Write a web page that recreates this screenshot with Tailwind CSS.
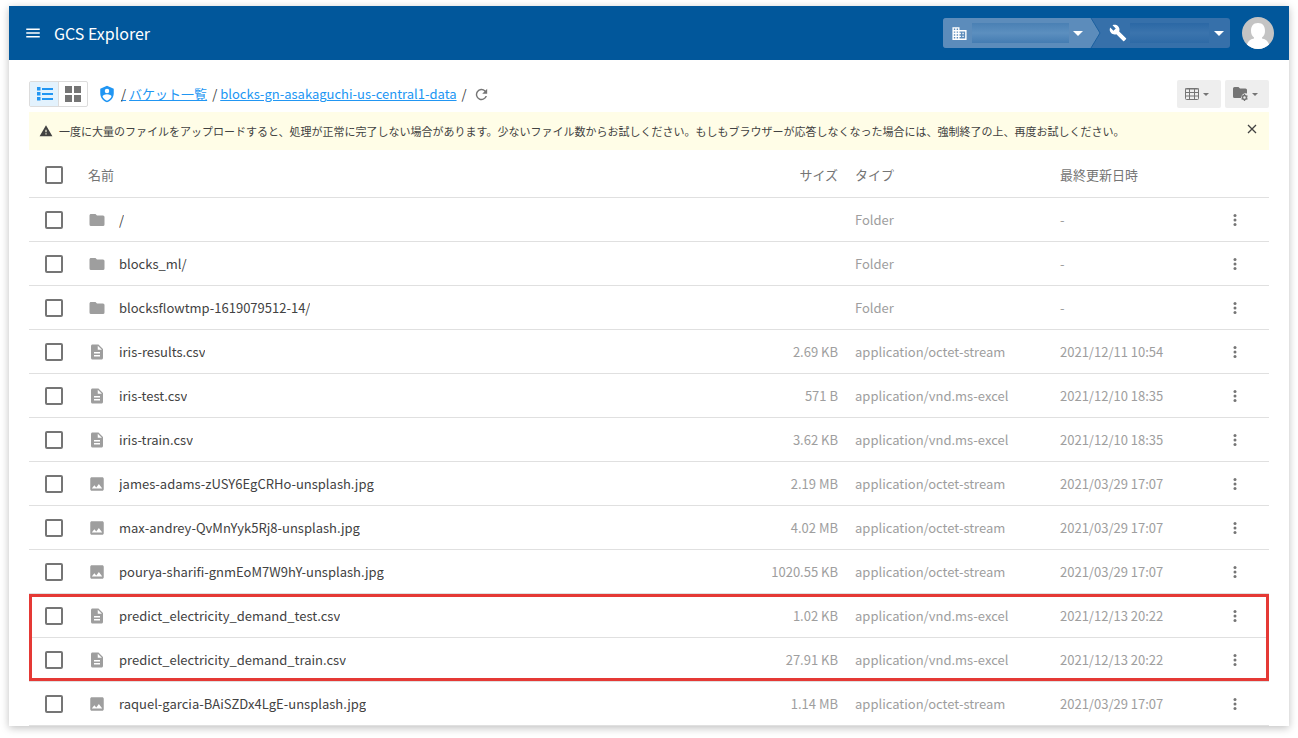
<!DOCTYPE html>
<html lang="ja">
<head>
    <meta charset="UTF-8">
    <meta name="viewport" content="width=device-width, initial-scale=1.0">
    <title>GCS Explorer</title>
    <script src="https://cdn.jsdelivr.net/npm/@tailwindcss/browser@4"></script>
</head>
<body class="bg-white font-['Noto_Sans_CJK_JP',sans-serif] text-[13px] text-[#424242]">
    <!-- Icons -->
    <svg class="hidden">
        <symbol id="folder" viewBox="0 0 24 24"><path d="M10 4H4c-1.1 0-2 .9-2 2v12a2 2 0 0 0 2 2h16a2 2 0 0 0 2-2V8a2 2 0 0 0-2-2h-8l-2-2z"/></symbol>
        <symbol id="file" viewBox="0 0 24 24"><path d="M14 2H6c-1.1 0-2 .9-2 2v16c0 1.1.9 2 2 2h12c1.1 0 2-.9 2-2V8l-6-6zm2 16H8v-2h8v2zm0-4H8v-2h8v2zm-3-5V3.500L18.500 9H13z"/></symbol>
        <symbol id="image" viewBox="0 0 24 24"><path d="M21 19V5c0-1.100-.9-2-2-2H5c-1.100 0-2 .9-2 2v14c0 1.100.9 2 2 2h14c1.100 0 2-.9 2-2zM8.500 13.500l2.500 3L14.500 12l4.500 6H5l3.500-4.500z"/></symbol>
        <symbol id="dots" viewBox="0 0 24 24"><circle cx="12" cy="6" r="2"/><circle cx="12" cy="12" r="2"/><circle cx="12" cy="18" r="2"/></symbol>
    </svg>

    <div class="mx-[9px] mt-1.5 mb-3 bg-white shadow-[0_2px_8px_rgba(0,0,0,0.25)]">
        <!-- Header -->
        <header class="flex items-center h-[54px] pl-[15px] pr-[15px] bg-[#01579b] text-white">
            <button type="button" aria-label="メニュー">
                <svg class="size-[18px]" viewBox="0 0 24 24" fill="currentColor"><path d="M3 6h18v2H3zM3 11h18v2H3zM3 16h18v2H3z"/></svg>
            </button>
            <h1 class="ml-3 text-base">GCS Explorer</h1>

            <div class="relative flex ml-auto h-[30px] rounded-[3px] bg-[#3670aa] overflow-hidden">
                <svg class="absolute inset-0 w-[160px] h-[30px]" viewBox="0 0 160 30">
                    <path d="M0 0H148L157 15L148 30H0z" fill="#5c8cbb"/>
                    <path d="M148 0L157 15L148 30" fill="none" stroke="#1c609f"/>
                </svg>
                <button type="button" aria-label="プロジェクト" class="relative flex items-center w-[157px] pl-2">
                    <svg class="size-[17px]" viewBox="0 0 24 24" fill="currentColor"><path d="M12 7V3H2v18h20V7H12zM6 19H4v-2h2v2zm0-4H4v-2h2v2zm0-4H4V9h2v2zm0-4H4V5h2v2zm4 12H8v-2h2v2zm0-4H8v-2h2v2zm0-4H8V9h2v2zm0-4H8V5h2v2zm10 12h-8v-2h2v-2h-2v-2h2v-2h-2V9h8v10zm-2-8h-2v2h2v-2zm0 4h-2v2h2v-2z"/></svg>
                    <span class="ml-1 w-[97px] h-5 bg-linear-to-b from-[#4a80b4] via-[#5c8fbf] to-[#447cb2]"></span>
                    <svg class="ml-1 w-[10px] h-[5px]" viewBox="0 0 10 5" fill="currentColor"><path d="M0 0h10L5 5z"/></svg>
                </button>
                <button type="button" aria-label="ツール" class="relative flex items-center w-[130px] pl-[9px]">
                    <svg class="size-[18px]" viewBox="0 0 24 24" fill="currentColor"><path d="M22.700 19l-9.100-9.100c.9-2.300.4-5-1.500-6.900-2-2-5-2.400-7.400-1.300L9 6 6 9 1.600 4.700C.4 7.100.9 10.100 2.900 12.100c1.900 1.900 4.600 2.400 6.900 1.500l9.100 9.100c.4.4 1 .4 1.400 0l2.300-2.300c.5-.4.5-1.100.1-1.400z"/></svg>
                    <span class="ml-[3px] w-[79px] h-5 bg-linear-to-b from-[#2b68a5] via-[#3b74ad] to-[#2e6aa6]"></span>
                    <svg class="ml-[5px] w-[10px] h-[5px]" viewBox="0 0 10 5" fill="currentColor"><path d="M0 0h10L5 5z"/></svg>
                </button>
            </div>
            <button type="button" aria-label="アカウント" class="ml-3">
                <svg class="size-8 rounded-full" viewBox="0 0 32 32">
                    <path d="M0 0h32v32H0z" fill="#c4c4c4"/>
                    <path d="M16 6c5 0 7 3.500 7 8 0 3-1 5-3 6.500v1c4 .5 6.500 3 7.500 7.500L22 32H10l-5.500-3C5.500 24.500 8 22 12 21.500v-1C10 19 9 17 9 14c0-4.500 2-8 7-8z" fill="#fff"/>
                </svg>
            </button>
        </header>

        <main class="px-5 pt-5">
            <!-- Toolbar -->
            <div class="flex items-center h-7">
                <div class="flex h-[26px] border border-[#dcdcdc] rounded-[2px]">
                    <button type="button" aria-label="リスト表示" class="flex items-center justify-center w-[29px] pl-px bg-[#e3f2fd] border-r border-[#dcdcdc] text-[#2196f3]">
                        <svg class="w-4 h-3.5" viewBox="0 0 16 14" fill="currentColor"><path d="M0 0h3.500v3.500H0zM0 5h3.500v3.500H0zM0 10h3.500v3.500H0zM5 1h11v2H5zM5 6h11v2H5zM5 11h11v2H5z"/></svg>
                    </button>
                    <button type="button" aria-label="グリッド表示" class="flex items-center justify-center w-7 text-[#757575]">
                        <svg class="size-4" viewBox="0 0 16 16" fill="currentColor"><path d="M0 0h7v7H0zM9 0h7v7H9zM0 9h7v7H0zM9 9h7v7H9z"/></svg>
                    </button>
                </div>
                <nav class="flex items-center ml-2.5">
                    <a href="#" aria-label="プロジェクト" class="text-[#2196f3]">
                        <svg class="size-[18px]" viewBox="0 0 24 24" fill="currentColor"><path d="M12 1L3 5v6c0 5.550 3.840 10.740 9 12 5.160-1.260 9-6.450 9-12V5l-9-4zm0 4a3 3 0 1 1 0 6 3 3 0 0 1 0-6zm5.130 12A9.700 9.700 0 0 1 12 20.920 9.700 9.700 0 0 1 6.870 17 12 12 0 0 1 6 15.470c0-1.650 2.710-3 6-3s6 1.320 6 3A12 12 0 0 1 17.130 17z"/></svg>
                    </a>
                    <span class="ml-[5px] underline decoration-[#2196f3]">/</span>
                    <a href="#" class="ml-[3px] text-[#2196f3] underline">バケット一覧</a>
                    <span class="ml-[5px]">/</span>
                    <a href="#" class="ml-[3px] text-[#2196f3] underline">blocks-gn-asakaguchi-us-central1-data</a>
                    <span class="ml-[5px]">/</span>
                    <button type="button" aria-label="更新" class="ml-1.5 text-[#757575]">
                        <svg class="size-[17px]" viewBox="0 0 24 24" fill="currentColor"><path d="M17.650 6.350A8 8 0 1 0 19.730 14h-2.080A6 6 0 1 1 16.220 7.780L13 11h7V4l-2.350 2.350z"/></svg>
                    </button>
                </nav>
                <div class="flex gap-1 ml-auto text-[#757575]">
                    <button type="button" aria-label="表示列" class="flex items-center justify-center gap-1 w-11 h-7 pr-1 rounded-[2px] bg-[#eeeeee]">
                        <svg class="w-3.5 h-3" viewBox="0 0 14 12" fill="none" stroke="currentColor"><rect x=".5" y=".5" width="13" height="11" rx="1"/><path d="M0 1h14M0 4.500h14M0 8h14M4.500 1v11M9.500 1v11"/></svg>
                        <svg class="w-1.5 h-[3px]" viewBox="0 0 6 3" fill="currentColor"><path d="M0 0h6L3 3z"/></svg>
                    </button>
                    <button type="button" aria-label="フォルダ操作" class="flex items-center justify-center gap-1 w-11 h-7 pr-1 rounded-[2px] bg-[#eeeeee]">
                        <svg class="w-[15px] h-[14px]" viewBox="0 0 15 14" fill="currentColor"><path d="M1.500 0h4L7 1.500h5.500A1.500 1.500 0 0 1 14 3v3.500a4.500 4.500 0 0 0-6 4.500H1.500A1.500 1.500 0 0 1 0 9.500v-8A1.500 1.500 0 0 1 1.500 0z"/><circle cx="11.500" cy="10.500" r="2" fill="none" stroke="currentColor" stroke-width="1.500"/><path d="M11.500 7v1.500M11.500 12.500V14M8.500 8.700l1.300.8M13.200 11.500l1.300.8M8.500 12.300l1.300-.8M13.200 9.500l1.300-.8" stroke="currentColor" stroke-width="1.300"/></svg>
                        <svg class="w-1.5 h-[3px]" viewBox="0 0 6 3" fill="currentColor"><path d="M0 0h6L3 3z"/></svg>
                    </button>
                </div>
            </div>

            <!-- Notice -->
            <div class="flex items-center mt-1 min-h-[38px] pl-2.5 pr-3 bg-[#fffde7]">
                <svg class="size-3.5 shrink-0" viewBox="0 0 24 24" fill="currentColor"><path d="M1 21h22L12 2 1 21zm12-3h-2v-2h2v2zm0-4h-2v-4h2v4z"/></svg>
                <p class="ml-1.5 text-[11px]">一度に大量のファイルをアップロードすると、処理が正常に完了しない場合があります。少ないファイル数からお試しください。もしもブラウザーが応答しなくなった場合には、強制終了の上、再度お試しください。</p>
                <button type="button" aria-label="閉じる" class="ml-auto mb-1">
                    <svg class="size-2.5" viewBox="0 0 10 10" fill="none" stroke="currentColor" stroke-width="1.300"><path d="M1 1l8 8M9 1L1 9"/></svg>
                </button>
            </div>

            <!-- File list -->
            <table id="fileTable" class="w-full mt-[3px] table-fixed border-separate border-spacing-0 text-left text-[#9e9e9e]">
                <thead class="text-[#757575]">
                    <tr class="h-[45px] *:border-b *:border-[#e0e0e0] *:font-normal">
                        <th class="w-[59px] pl-4"><input type="checkbox" aria-label="すべて選択" class="block size-[18px] appearance-none border-2 border-[#757575] rounded-[2px] checked:bg-[#2196f3]"></th>
                        <th>名前</th>
                        <th class="w-[120px] pr-[9px] text-right">サイズ</th>
                        <th class="w-[205px] pl-2">タイプ</th>
                        <th class="w-[149px] pl-2">最終更新日時</th>
                        <th class="w-[68px]"></th>
                    </tr>
                </thead>
            </table>
        </main>
    </div>

    <script>
        const octet = 'application/octet-stream';
        const excel = 'application/vnd.ms-excel';

        // each group becomes one tbody
        const groups = [
            { marked: false, files: [
                ['folder', '/', '', 'Folder', '-'],
                ['folder', 'blocks_ml/', '', 'Folder', '-'],
                ['folder', 'blocksflowtmp-1619079512-14/', '', 'Folder', '-'],
                ['file', 'iris-results.csv', '2.69 KB', octet, '2021/12/11 10:54'],
                ['file', 'iris-test.csv', '571 B', excel, '2021/12/10 18:35'],
                ['file', 'iris-train.csv', '3.62 KB', excel, '2021/12/10 18:35'],
                ['image', 'james-adams-zUSY6EgCRHo-unsplash.jpg', '2.19 MB', octet, '2021/03/29 17:07'],
                ['image', 'max-andrey-QvMnYyk5Rj8-unsplash.jpg', '4.02 MB', octet, '2021/03/29 17:07'],
                ['image', 'pourya-sharifi-gnmEoM7W9hY-unsplash.jpg', '1020.55 KB', octet, '2021/03/29 17:07'],
            ] },
            { marked: true, files: [
                ['file', 'predict_electricity_demand_test.csv', '1.02 KB', excel, '2021/12/13 20:22'],
                ['file', 'predict_electricity_demand_train.csv', '27.91 KB', excel, '2021/12/13 20:22'],
            ] },
            { marked: false, files: [
                ['image', 'raquel-garcia-BAiSZDx4LgE-unsplash.jpg', '1.14 MB', octet, '2021/03/29 17:07'],
            ] },
        ];

        const row = ([icon, name, size, type, date]) => `
            <tr class="h-11 *:border-b *:border-[#e0e0e0]">
                <td class="pl-4"><input type="checkbox" aria-label="${name}" class="block size-[18px] appearance-none border-2 border-[#757575] rounded-[2px] checked:bg-[#2196f3]"></td>
                <td>
                    <div class="flex items-center gap-[13px] text-[#424242]">
                        <svg class="size-[18px] shrink-0 text-[#9e9e9e]" fill="currentColor"><use href="#${icon}"/></svg>
                        <span class="truncate">${name}</span>
                    </div>
                </td>
                <td class="pr-[9px] text-right">${size}</td>
                <td class="pl-2">${type}</td>
                <td class="pl-2">${date}</td>
                <td><button type="button" aria-label="操作" class="block mx-auto text-[#757575]"><svg class="size-[18px]" fill="currentColor"><use href="#dots"/></svg></button></td>
            </tr>`;

        const table = document.getElementById('fileTable');
        groups.forEach(({ marked, files }) => {
            const tbody = document.createElement('tbody');
            if (marked) {
                tbody.className = 'relative after:absolute after:inset-x-0 after:top-0 after:bottom-px after:border-3 after:border-[#e53935] after:pointer-events-none';
            }
            tbody.innerHTML = files.map(row).join('');
            table.appendChild(tbody);
        });
    </script>
</body>
</html>
